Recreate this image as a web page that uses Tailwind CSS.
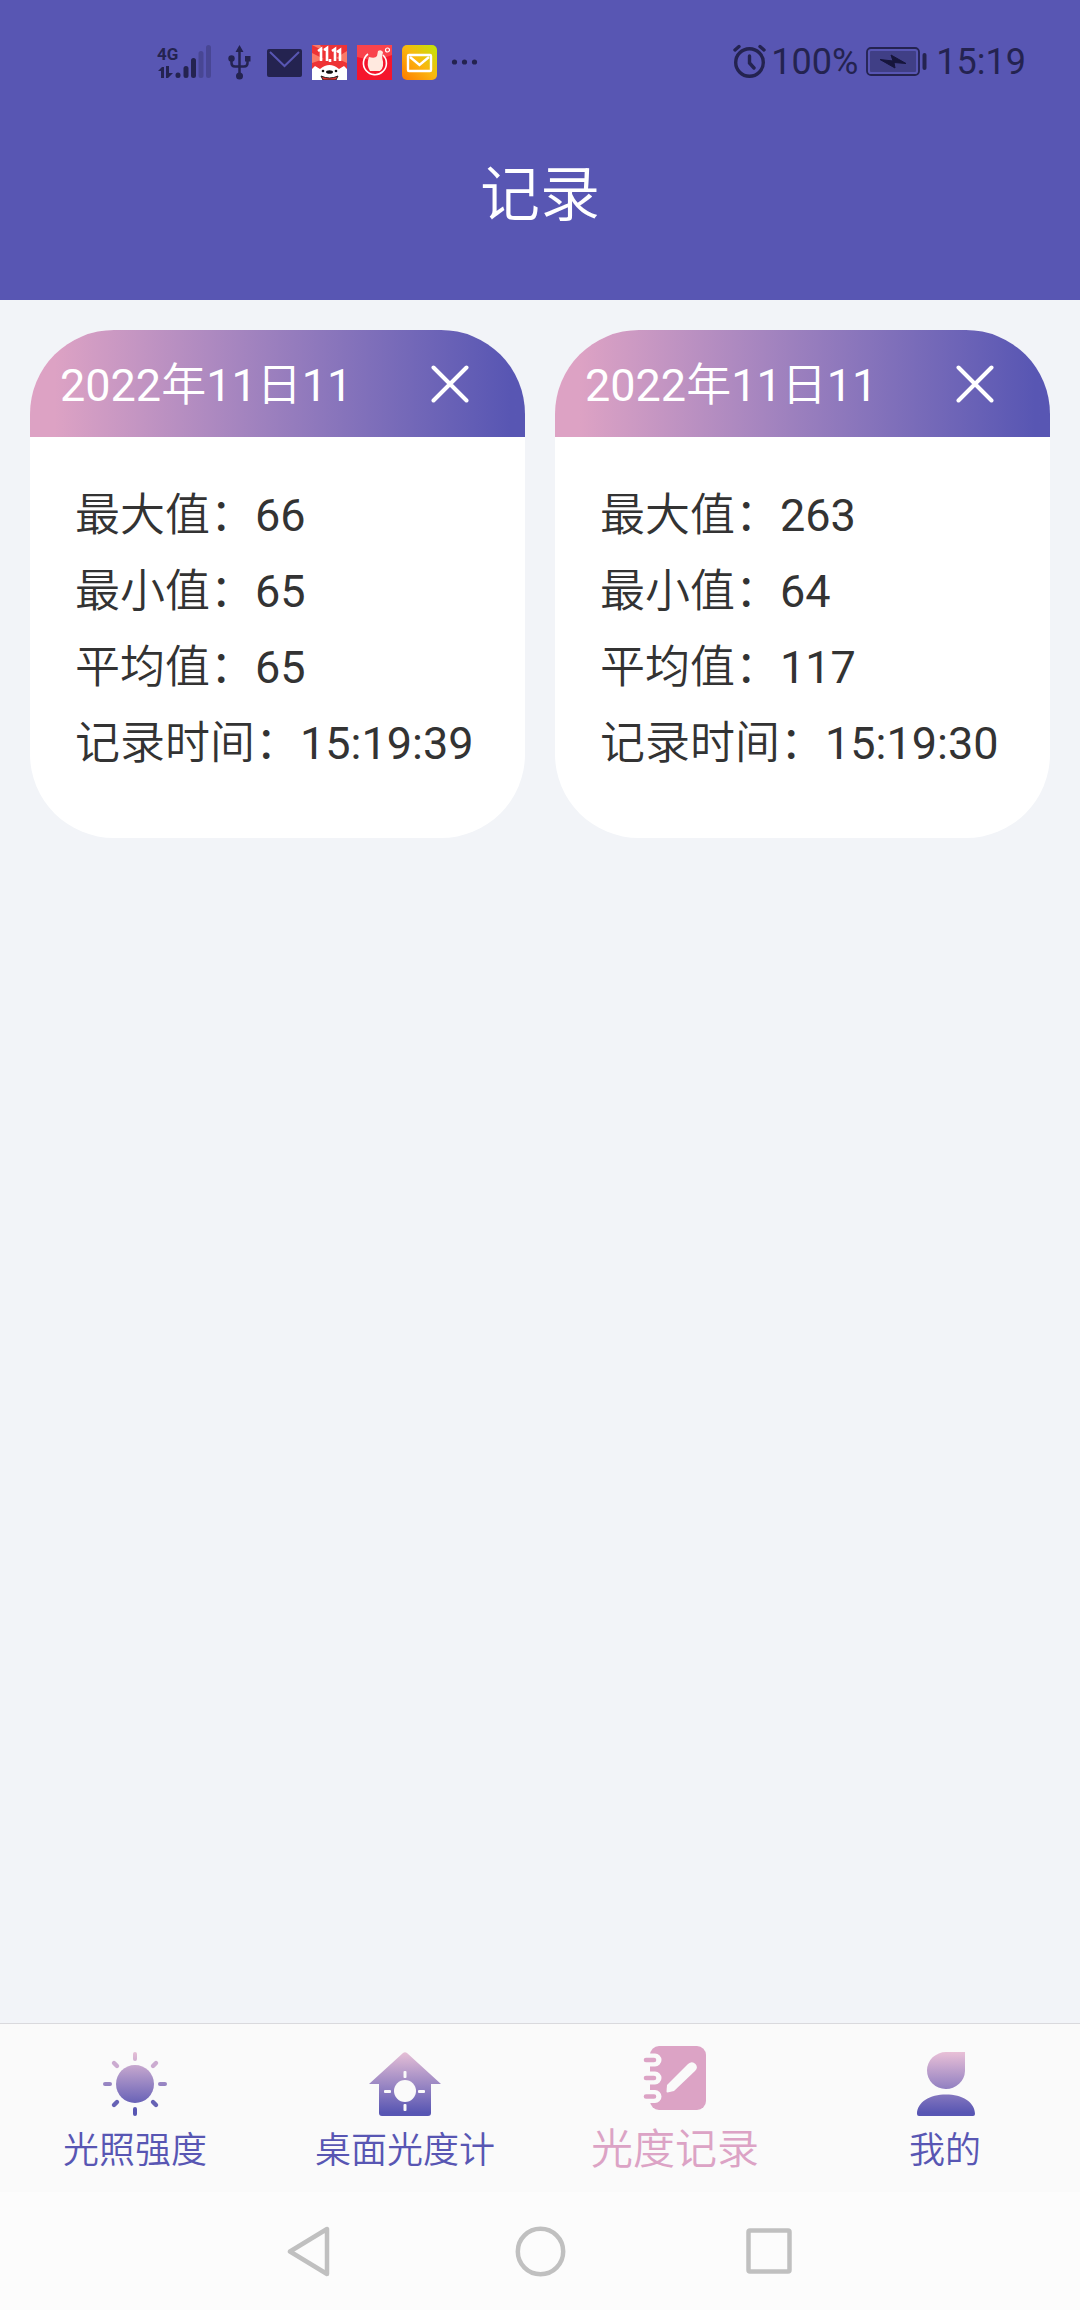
<!DOCTYPE html>
<html lang="zh-CN">
<head>
<meta charset="utf-8">
<meta name="viewport" content="width=device-width, initial-scale=1">
<title>记录</title>
<script src="https://cdn.jsdelivr.net/npm/@tailwindcss/browser@4"></script>
</head>
<body class="flex min-h-screen flex-col bg-[#f2f4f8] font-[Roboto,'Noto_Sans_CJK_SC',sans-serif] text-[#333333]">

<header class="bg-[#5856b3]">
  <!-- Status bar -->
  <div class="flex h-[84px] items-end justify-between pr-[54px] pb-1 pl-[157px] text-[#242350]">
    <div class="flex items-center gap-[10px]">
      <svg class="h-[35px] w-[55px] overflow-visible" viewBox="0 0 55 35" fill="currentColor" role="img" aria-label="4G">
        <text x="0" y="15" font-family="Roboto" font-weight="700" font-size="17">4G</text>
        <path d="M1 26 5 22H7V33H4V26ZM9 21H12V28H16L11 33H9Z"/>
        <g stroke="currentColor" stroke-width="5" stroke-linecap="round">
          <path d="M21 30V30.500M29 23.500V30.500M36.500 15.500V30.500"/>
          <path d="M44 8.500V30.500M51.500 2.500V30.500" opacity=".3"/>
        </g>
      </svg>
      <svg class="size-[35px]" viewBox="0 0 35 35" fill="none" stroke="currentColor" stroke-width="2.500" role="img" aria-label="USB">
        <path d="M17.500 5V30M9.500 14V18Q9.500 21.500 13 21.500H22Q25.500 21.500 25.500 18V14"/>
        <path d="M17.500 0 21.500 7H13.500ZM23 11H28.500V16.500H23Z" fill="currentColor" stroke="none"/>
        <circle cx="9.500" cy="13.500" r="3.200" fill="currentColor" stroke="none"/>
        <circle cx="17.500" cy="31" r="3.500" fill="currentColor" stroke="none"/>
      </svg>
      <svg class="size-[35px]" viewBox="0 0 35 35" role="img" aria-label="邮件">
        <rect x="0" y="4" width="35" height="28" rx="2" fill="currentColor"/>
        <path d="M3 7 17.500 21 32 7" fill="none" stroke="#5856b3" stroke-width="2"/>
      </svg>
      <svg class="size-[35px]" viewBox="0 0 35 35" role="img" aria-label="京东">
        <rect width="35" height="35" fill="#ee3335"/>
        <path d="M0 8 12 14 0 18ZM35 6 24 13 35 18ZM0 0H8L12 6Z" fill="#fa7a68"/>
        <path d="M6 6 9 4V16M12 5 15 3V16M18 14V17M20 6 23 4V16M25 7 28 5V16" fill="none" stroke="#fff" stroke-width="2.600"/>
        <path d="M0 24 3 21 8 24Q17.500 16 27 24L32 21 35 24V35H0Z" fill="#fff"/>
        <ellipse cx="17.500" cy="27" rx="3.500" ry="1.800" fill="#111"/>
        <circle cx="11" cy="26" r="1.300" fill="#111"/><circle cx="24" cy="26" r="1.300" fill="#111"/>
        <path d="M9 31Q17.500 35 26 31L24 35H11Z" fill="#e8322e" stroke="#222" stroke-width="1"/>
      </svg>
      <svg class="size-[35px]" viewBox="0 0 35 35" role="img" aria-label="购物">
        <rect width="35" height="35" fill="#f5152c"/>
        <path d="M0 0H35V10L18 16 0 12Z" fill="#f9434c"/>
        <path d="M11 9A11.500 11.500 0 1 0 26 10" fill="none" stroke="#fff" stroke-width="1.600"/>
        <path d="M12 12Q18 14 20 11L21 6Q24 4 26 7L25 12Q28 22 23 26H13Q9 20 12 12Z" fill="#ffe9df"/>
        <circle cx="30.500" cy="5" r="2" fill="none" stroke="#fff" stroke-width="1.200"/>
      </svg>
      <svg class="size-[35px]" viewBox="0 0 35 35" role="img" aria-label="邮箱">
        <defs><linearGradient id="mailbox" x1="0" y1="1" x2="1" y2="0"><stop offset="0" stop-color="#ff7a00"/><stop offset=".5" stop-color="#fbb60e"/><stop offset="1" stop-color="#bfe80a"/></linearGradient></defs>
        <rect width="35" height="35" rx="5" fill="url(#mailbox)"/>
        <rect x="6" y="10" width="23" height="16" rx="1" fill="none" stroke="#fff" stroke-width="2.400"/>
        <path d="M8 12 17.500 20 27 12" fill="none" stroke="#fff" stroke-width="2.400"/>
      </svg>
      <svg class="size-[35px]" viewBox="0 0 35 35" fill="currentColor" role="img" aria-label="更多通知">
        <circle cx="7.500" cy="17" r="2.600"/><circle cx="17.500" cy="17" r="2.600"/><circle cx="27.500" cy="17" r="2.600"/>
      </svg>
    </div>
    <div class="flex items-center gap-2 text-[36px] leading-[35px]">
      <div class="flex items-center gap-1">
        <svg class="size-[35px]" viewBox="0 0 35 35" fill="none" stroke="currentColor" stroke-width="3.400" stroke-linecap="round" role="img" aria-label="闹钟">
          <circle cx="17.500" cy="18.500" r="13.800"/>
          <path d="M17.500 12V19L22 24M3 6 7 2.500M32 6 28 2.500"/>
        </svg>
        <span class="pt-[2px]">100%</span>
      </div>
      <svg class="h-[35px] w-[62px]" viewBox="0 0 62 35" role="img" aria-label="充电中">
        <rect x="1" y="4" width="52" height="27" rx="4" fill="none" stroke="currentColor" stroke-width="1.800"/>
        <rect x="4" y="7" width="46" height="21" rx="1" fill="currentColor" opacity=".45"/>
        <path d="M14 15.500 27 17 25 11 40 19.500 28 18.500 29 24Z" fill="#16153c" stroke="#16153c"/>
        <rect x="56.500" y="9" width="4" height="17" rx="2" fill="currentColor"/>
      </svg>
      <span class="pt-[2px]">15:19</span>
    </div>
  </div>
  <h1 class="flex h-[216px] items-center justify-center pt-2 text-[60px] font-[350] text-white">记录</h1>
</header>

<main class="grid flex-1 grid-cols-2 items-start gap-[30px] p-[30px] text-[45px]">
  <article class="overflow-hidden rounded-[84px] bg-white">
    <div class="flex h-[107px] items-center justify-between bg-linear-to-r from-[#dda2c4] from-5% to-[#5856b3] to-97% pr-[56px] pl-[30px] text-white">
      <h2 class="pt-1">2022<span class="font-[350]">年</span>11<span class="font-[350]">日</span>11</h2>
      <button type="button" aria-label="删除">
        <svg class="size-[38px]" viewBox="0 0 38 38" fill="none" stroke="currentColor" stroke-width="4" stroke-linecap="round"><path d="M2.500 2.500 35.500 35.500M35.500 2.500 2.500 35.500"/></svg>
      </button>
    </div>
    <dl class="px-[45px] pt-[41px] pb-[56px] leading-[76px]">
      <div class="flex"><dt class="font-[350]">最大值：</dt><dd>66</dd></div>
      <div class="flex"><dt class="font-[350]">最小值：</dt><dd>65</dd></div>
      <div class="flex"><dt class="font-[350]">平均值：</dt><dd>65</dd></div>
      <div class="flex"><dt class="font-[350]">记录时间：</dt><dd>15:19:39</dd></div>
    </dl>
  </article>
  <article class="overflow-hidden rounded-[84px] bg-white">
    <div class="flex h-[107px] items-center justify-between bg-linear-to-r from-[#dda2c4] from-5% to-[#5856b3] to-97% pr-[56px] pl-[30px] text-white">
      <h2 class="pt-1">2022<span class="font-[350]">年</span>11<span class="font-[350]">日</span>11</h2>
      <button type="button" aria-label="删除">
        <svg class="size-[38px]" viewBox="0 0 38 38" fill="none" stroke="currentColor" stroke-width="4" stroke-linecap="round"><path d="M2.500 2.500 35.500 35.500M35.500 2.500 2.500 35.500"/></svg>
      </button>
    </div>
    <dl class="px-[45px] pt-[41px] pb-[56px] leading-[76px]">
      <div class="flex"><dt class="font-[350]">最大值：</dt><dd>263</dd></div>
      <div class="flex"><dt class="font-[350]">最小值：</dt><dd>64</dd></div>
      <div class="flex"><dt class="font-[350]">平均值：</dt><dd>117</dd></div>
      <div class="flex"><dt class="font-[350]">记录时间：</dt><dd>15:19:30</dd></div>
    </dl>
  </article>
</main>

<!-- Tab bar -->
<nav class="grid h-[169px] grid-cols-4 border-t border-[#d9d9dd] bg-[#fafafa] text-[36px] leading-[48px] font-[350] text-[#5856b3]">
  <a href="#light" class="flex flex-col items-center gap-[11px] pt-7">
    <svg class="size-16" viewBox="0 0 64 64">
      <defs><linearGradient id="sun" gradientUnits="userSpaceOnUse" x1="0" y1="0" x2="0" y2="64"><stop offset="0" stop-color="#e6bfd6"/><stop offset=".9" stop-color="#5856b3"/></linearGradient></defs>
      <circle cx="32" cy="32" r="19" fill="url(#sun)"/>
      <g fill="url(#sun)">
        <rect x="30" y="0" width="4" height="9" rx="2"/><rect x="30" y="55" width="4" height="9" rx="2"/>
        <rect x="0" y="30" width="9" height="4" rx="2"/><rect x="55" y="30" width="9" height="4" rx="2"/>
      </g>
      <path d="M11 11 14 14M53 11 50 14" stroke="#cbabd0" stroke-width="4.400" stroke-linecap="round"/>
      <path d="M11 53 14 50M53 53 50 50" stroke="#6662b5" stroke-width="4.400" stroke-linecap="round"/>
    </svg>
    <span>光照强度</span>
  </a>
  <a href="#desk" class="flex flex-col items-center gap-[11px] pt-7">
    <svg class="h-16 w-[72px]" viewBox="0 0 72 64">
      <defs><linearGradient id="house" x1="0" y1="0" x2="0" y2="1"><stop offset="0" stop-color="#e6bfd6"/><stop offset=".95" stop-color="#5856b3"/></linearGradient></defs>
      <path d="M34 1Q36-.5 38 1L72 32H62V61Q62 64 59 64H13Q10 64 10 61V32H0Z" fill="url(#house)"/>
      <g fill="#fafafa"><circle cx="36" cy="39" r="11"/><rect x="34.500" y="19" width="3" height="7" rx="1"/><rect x="34.500" y="52" width="3" height="7" rx="1"/><rect x="15" y="38" width="7" height="3" rx="1"/><rect x="49" y="38" width="7" height="3" rx="1"/></g>
    </svg>
    <span>桌面光度计</span>
  </a>
  <a href="#records" aria-current="page" class="flex flex-col items-center gap-4 pt-[22px] text-[42px] text-[#dca3c5]">
    <svg class="size-16" viewBox="0 0 64 64" fill="#dca3c5">
      <rect x="7" y="0" width="56" height="64" rx="9"/>
      <path d="M2 14H12M2 32H12M2 50.500H12" stroke="#fafafa" stroke-width="13" stroke-linecap="round"/>
      <path d="M3 14H11M3 32H11M3 50.500H11" stroke="#dca3c5" stroke-width="4.600" stroke-linecap="round"/>
      <path d="M24 39 45 18Q49 14.500 52.500 18 55.500 21.500 52 25L31 45 24.500 46.500Q23.500 46.500 23.500 45.500Z" fill="#fafafa"/>
    </svg>
    <span>光度记录</span>
  </a>
  <a href="#me" class="flex flex-col items-center gap-[11px] pt-7">
    <svg class="size-16" viewBox="0 0 64 64">
      <defs><linearGradient id="person" gradientUnits="userSpaceOnUse" x1="0" y1="0" x2="0" y2="64"><stop offset="0" stop-color="#e9c0d7"/><stop offset=".95" stop-color="#5856b3"/></linearGradient></defs>
      <path d="M33 0H52V19A19 18.500 0 1 1 33 0ZM4 62C4 50 17 42.500 33 42.500S62 50 62 62Q62 64 60 64H6Q4 64 4 62Z" fill="url(#person)"/>
    </svg>
    <span>我的</span>
  </a>
</nav>

<!-- System navigation -->
<div class="flex h-[118px] items-center justify-center gap-[178px] bg-[#fcfcfc] text-[#c0c0c0]">
  <button type="button" aria-label="返回"><svg class="size-[51px]" viewBox="0 0 51 51" fill="none" stroke="currentColor" stroke-width="4.500" stroke-linejoin="round"><path d="M41 3V48L4 25.500Z"/></svg></button>
  <button type="button" aria-label="主屏幕"><svg class="size-[51px]" viewBox="0 0 51 51" fill="none" stroke="currentColor" stroke-width="4.500"><circle cx="25.500" cy="25.500" r="22.700"/></svg></button>
  <button type="button" aria-label="最近任务"><svg class="size-[51px]" viewBox="0 0 51 51" fill="none" stroke="currentColor" stroke-width="4.500"><rect x="4.500" y="4.500" width="41" height="41" rx="1.500"/></svg></button>
</div>
</body>
</html>
